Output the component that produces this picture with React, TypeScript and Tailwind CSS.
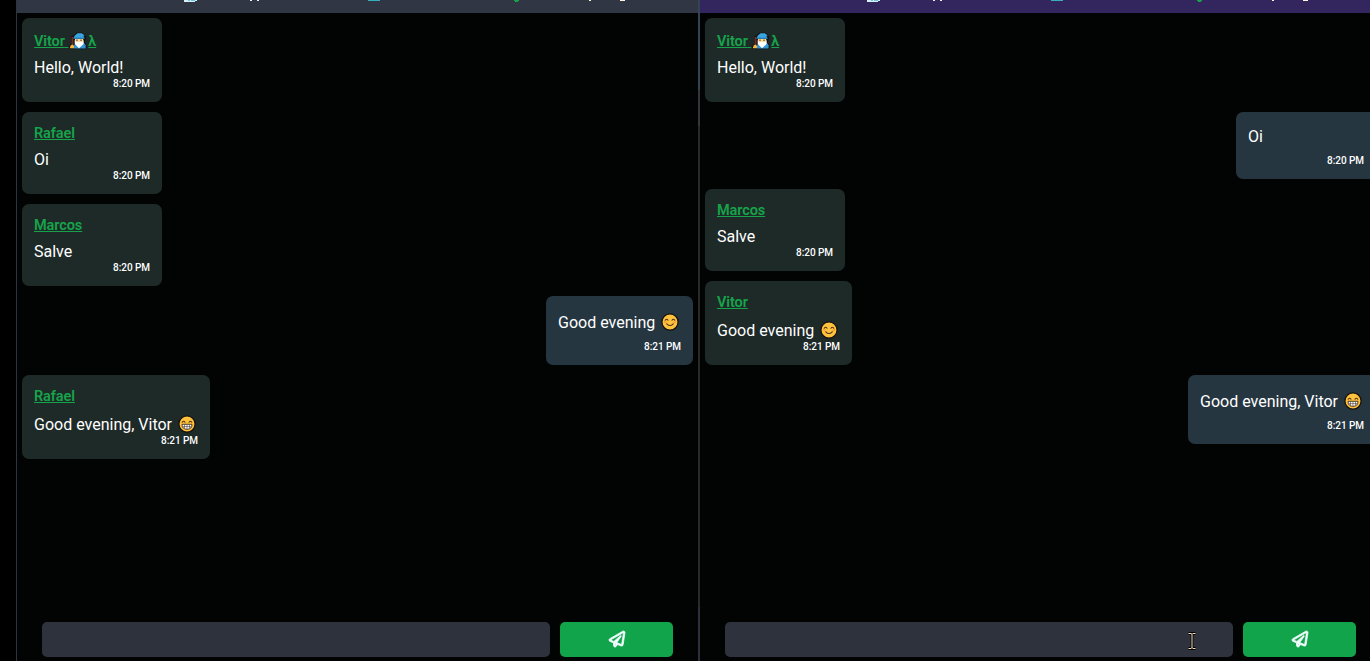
import { FaRegPaperPlane } from "react-icons/fa";

type Emoji = "smile" | "grin" | "mage";

interface Message {
  author?: string;
  mage?: boolean;
  text: string;
  emoji?: Emoji;
  time: string;
  width: string;
}

function Face({ kind }: { kind: Emoji }) {
  if (kind === "mage") {
    return (
      <svg viewBox="0 0 18 18" className="h-[18px] w-[18px]">
        <path d="M2.5 4.5 5 3.5 7.5 1.2h6L16.3 4v3l-1 3 1.7 3v3.7H.8v-3L2.5 12Z" fill="#111" stroke="#111" strokeWidth="1" strokeLinejoin="round" />
        <path d="M2.5 4.8h2V13h-2z" fill="#6b2f25" />
        <path d="M.8 16.2 1.6 13.4 3.4 12.6 5 13.8v2.4Z" fill="#fbb73c" />
        <path d="M4.8 16.5 5.2 13 6.4 10.5h8.4l1.8 2.8v3.2Z" fill="#3594d2" />
        <path d="M6 6.5h8.2v4l-4 3-4.2-3Z" fill="#f9d99a" />
        <path d="M5.6 8 7 10.2l3-.5 3 .5L14.6 8v4L10 16.2 5.8 12Z" fill="#fff" />
        <path d="M4.6 6.4 5.6 3.8 8.5 1.2h4.3l3 2.2-1.4.4 1.2 2.6Z" fill="#38a5e1" />
        <path d="M4.6 5.7h11v1H4.6z" fill="#1976ad" />
        <path d="M7.5 7.6h1v1.3h-1zm4 0h1v1.3h-1z" fill="#41301f" />
      </svg>
    );
  }
  return (
    <svg viewBox="0 0 18 18" className="h-[18px] w-[18px]">
      <circle cx="9" cy="9" r="8.1" fill="#ffc23d" stroke="#17120e" strokeWidth="1.3" />
      <path d="M4.2 7.2Q5.6 5.2 7 7.2M11 7.2Q12.4 5.2 13.8 7.2" fill="none" stroke="#51351c" strokeWidth="1.1" strokeLinecap="round" />
      {kind === "smile" ? (
        <>
          <path d="M5.8 10.8q3.2 3.4 6.4 0" fill="none" stroke="#51351c" strokeWidth="1.2" strokeLinecap="round" />
          <path d="M3.4 9h1.6M13 9h1.6" stroke="#f79a3b" strokeWidth="1.3" strokeLinecap="round" />
        </>
      ) : (
        <>
          <path d="M4 9.3h10q0 5-5 5t-5-5Z" fill="#fff" stroke="#3c2b20" strokeWidth=".9" />
          <path d="M4.5 11.6h9M6.5 9.5v4M9 9.5v4.5M11.5 9.5v4" stroke="#4b3c32" strokeWidth=".6" />
        </>
      )}
    </svg>
  );
}

function Bubble({ m }: { m: Message }) {
  const own = !m.author;
  return (
    <div
      className={`flex shrink-0 flex-col rounded-[7px] px-3 pb-3 ${m.width} ${
        own ? "self-end bg-[#253640] pt-[13px]" : "self-start bg-[#1e2a28] pt-2.5"
      }`}
    >
      {m.author && (
        <div className={`mb-0.5 flex items-end ${m.mage ? "h-[26px]" : "h-6"}`}>
          <div className="h-6 whitespace-pre text-[14.5px] leading-6 font-semibold tracking-[-0.1px] text-[#16a34a] underline decoration-1 underline-offset-1">
            {m.author}
            {m.mage && (
              <>
                {" "}
                <span className="mx-px inline-block h-[18px] w-[18px] align-[-4px]"><Face kind="mage" /></span>
                λ
              </>
            )}
          </div>
        </div>
      )}
      <div className={`flex items-end ${m.emoji ? "h-[26px]" : "h-6"}`}>
        <div className="flex h-6 items-center whitespace-pre text-[16px] leading-6 text-white">
          {m.text}
          {m.emoji && <span className="mb-[3px] ml-[6px]"><Face kind={m.emoji} /></span>}
        </div>
      </div>
      <div className={`h-3 self-end text-[10px] leading-3 font-medium tracking-[-0.05px] text-white ${own ? "mt-1.5" : "-mt-0.5"}`}>
        {m.time}
      </div>
    </div>
  );
}

const first: Message = { author: "Vitor", mage: true, text: "Hello, World!", time: "8:20 PM", width: "w-[140px]" };

const vitorView: Message[] = [
  first,
  { author: "Rafael", text: "Oi", time: "8:20 PM", width: "w-[140px]" },
  { author: "Marcos", text: "Salve", time: "8:20 PM", width: "w-[140px]" },
  { text: "Good evening", emoji: "smile", time: "8:21 PM", width: "w-[147px]" },
  { author: "Rafael", text: "Good evening, Vitor", emoji: "grin", time: "8:21 PM", width: "w-[188px]" },
];

const rafaelView: Message[] = [
  first,
  { text: "Oi", time: "8:20 PM", width: "w-[140px]" },
  { author: "Marcos", text: "Salve", time: "8:20 PM", width: "w-[140px]" },
  { author: "Vitor", text: "Good evening", emoji: "smile", time: "8:21 PM", width: "w-[147px]" },
  { text: "Good evening, Vitor", emoji: "grin", time: "8:21 PM", width: "w-[188px]" },
];

function Bookmarks({ color }: { color: string }) {
  return (
    <div className={`h-[13px] shrink-0 ${color}`}>
      <svg viewBox="0 0 681 13" className="h-[13px] w-[681px]" shapeRendering="crispEdges">
        <path d="M167 0h13v1h-13zM167 1h11v1h-11z" fill="#d8f1f7" />
        <path d="M171 0h2v1h-2zM174 0h4v1h-4z" fill="#6fc2dc" />
        <path d="M233 0h2v1h-2zM240 0h2v1h-2z" fill="#f4eee9" />
        <path d="M351 0h12v1h-12z" fill="#36aebd" />
        <path d="M497 0h5v1h-5zM498 1h3v1h-3z" fill="#16a34a" />
        <path d="M572 0h2v1h-2zM603 0h5v1h-5z" fill="#fff4dc" />
      </svg>
    </div>
  );
}

function Chat({ messages, header, pointer }: { messages: Message[]; header: string; pointer?: boolean }) {
  return (
    <section className="flex h-full w-[681px] shrink-0 flex-col bg-[#020403]">
      <Bookmarks color={header} />
      <div className="flex min-h-0 flex-1 flex-col gap-2.5 pt-[5px] pr-[5px] pl-[5px]">
        {messages.map((m, i) => (
          <Bubble key={i} m={m} />
        ))}
      </div>
      <form className="flex h-[39px] shrink-0 gap-2.5 pr-[25px] pb-1 pl-[25px]" onSubmit={(e) => e.preventDefault()}>
        <div className="relative w-[508px]">
          <input aria-label="Message" className="h-[35px] w-full rounded-[5px] bg-[#2d323c] px-3 text-white outline-none" />
          {pointer && (
            <svg viewBox="0 0 10 18" className="absolute top-[10px] left-[462px] h-[18px] w-[10px]">
              <path d="M1.5 1.5h2.7l.8.8.8-.8h2.7M5 2v14M1.5 16.5h2.7l.8-.8.8.8h2.7" fill="none" stroke="#000" strokeWidth="2.8" />
              <path d="M1.5 1.5h2.7l.8.8.8-.8h2.7M5 2v14M1.5 16.5h2.7l.8-.8.8.8h2.7" fill="none" stroke="#f5dfbd" strokeWidth="1" />
            </svg>
          )}
        </div>
        <button aria-label="Send" className="flex h-[35px] w-[113px] items-center justify-center rounded-[5px] bg-[#12a44b] text-[#f4fdff]">
          <FaRegPaperPlane className="mb-px ml-px h-4 w-4 overflow-visible stroke-current stroke-[24]" />
        </button>
      </form>
    </section>
  );
}

export default function App() {
  return (
    <main className="flex h-[661px] w-full overflow-hidden bg-black pl-4 font-['Roboto',sans-serif]">
      <div className="w-px shrink-0 bg-[#2c3442]" />
      <Chat messages={vitorView} header="bg-[#303643]" />
      <div className="flex w-0.5 shrink-0 flex-col">
        <div className="h-[90px] bg-[#344252]" />
        <div className="h-[36px] bg-[#37353b]" />
        <div className="flex-1 bg-[#292929]" />
        <div className="h-[54px] bg-[#2b303d]" />
      </div>
      <Chat messages={rafaelView} header="bg-[#33265f]" pointer />
    </main>
  );
}
